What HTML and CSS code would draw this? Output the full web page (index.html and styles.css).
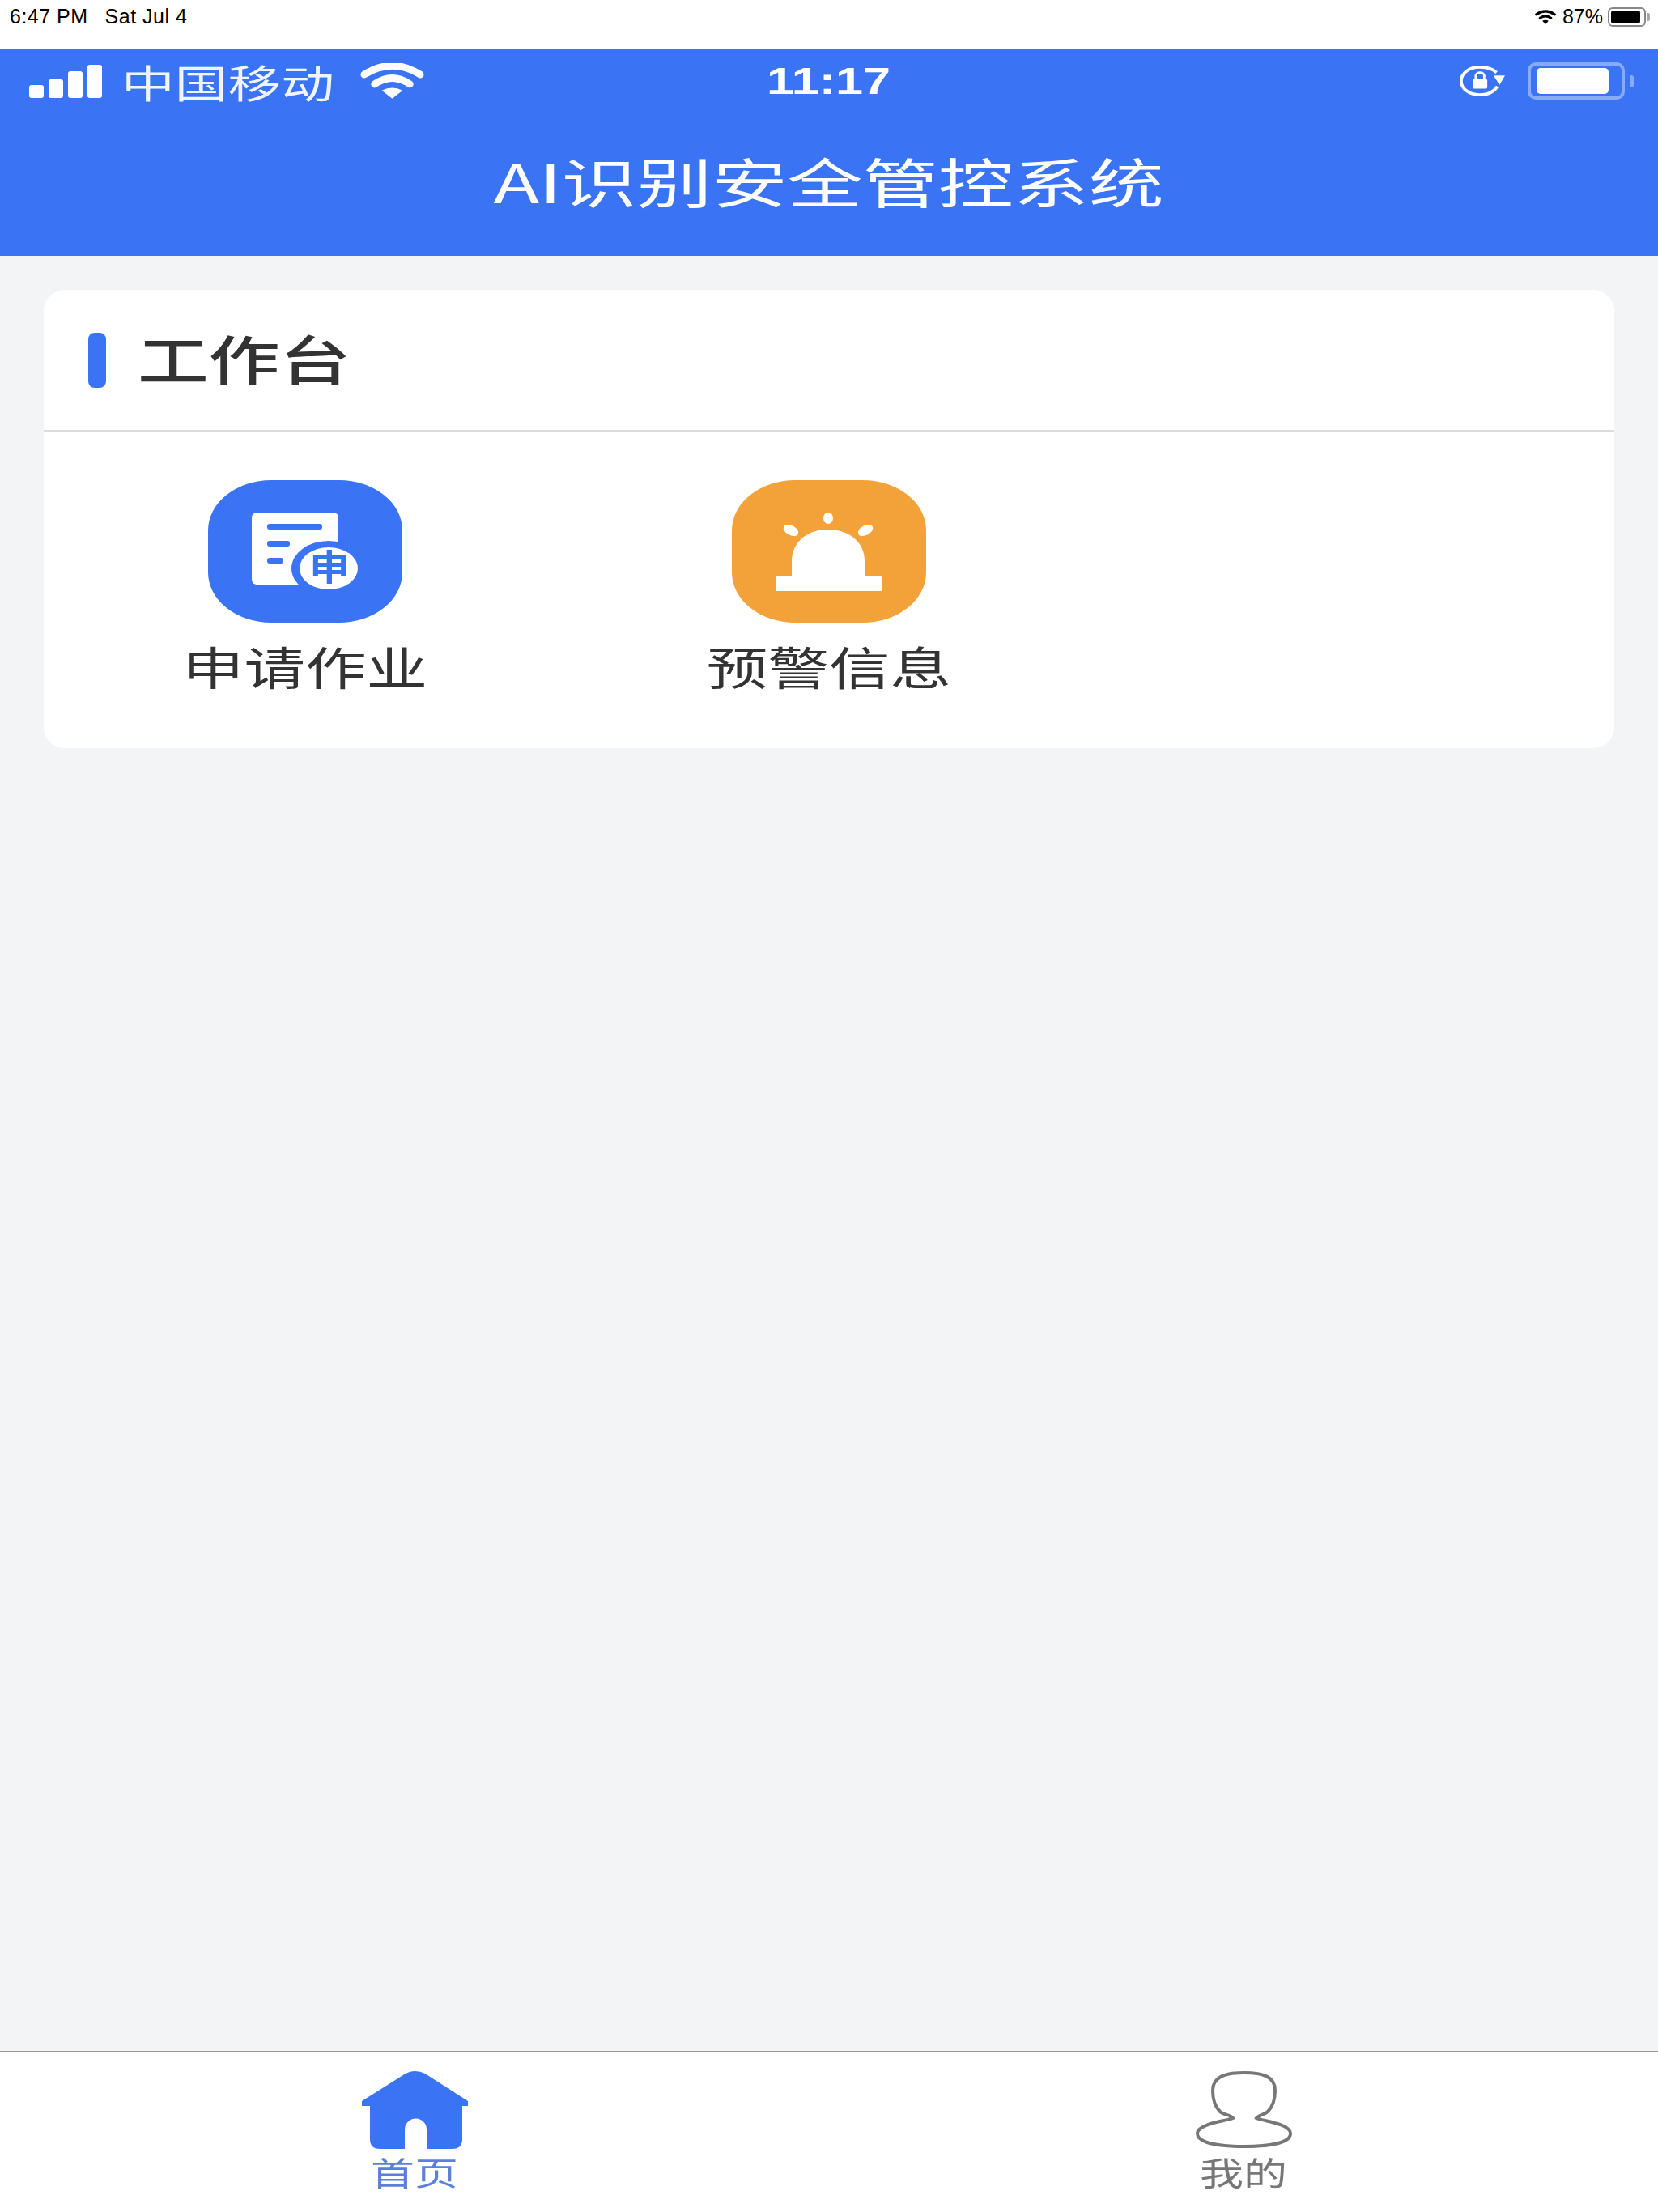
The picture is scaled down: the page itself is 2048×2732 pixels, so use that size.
FILE: index.html
```html
<!DOCTYPE html>
<html lang="zh-CN">
<head>
    <meta charset="UTF-8">
    <meta name="viewport" content="width=device-width, initial-scale=1.0">
    <title>AI识别安全管控系统</title>
    <link rel="stylesheet" href="styles.css">
</head>
<body>

<!-- iPad status bar -->
<div class="sysbar">
    <div class="sys-left">
        <span>6:47 PM</span>
        <span>Sat Jul 4</span>
    </div>
    <div class="sys-right">
        <svg class="sys-wifi" viewBox="0 0 80 56">
            <path d="M5 18Q40 -6 75 18" fill="none" stroke="#000" stroke-width="10" stroke-linecap="round"/>
            <path d="M19 32Q40 17 61 32" fill="none" stroke="#000" stroke-width="10" stroke-linecap="round"/>
            <path d="M28 43Q40 36 52 43L40 56Z" fill="#000"/>
        </svg>
        <span class="sys-pct">87%</span>
        <div class="sys-batt"><div class="sys-batt-fill"></div></div>
        <div class="sys-nub"></div>
    </div>
</div>

<!-- App header, phone status row is part of the app frame -->
<header class="app-head">
    <div class="phone-status">
        <div class="phone-left">
            <div class="signal">
                <i class="bar bar1"></i>
                <i class="bar bar2"></i>
                <i class="bar bar3"></i>
                <i class="bar bar4"></i>
            </div>
            <span class="carrier">中国移动</span>
            <svg class="phone-wifi" viewBox="0 0 80 44">
                <path d="M5 14Q40 -8 75 14" fill="none" stroke="#fff" stroke-width="9" stroke-linecap="round"/>
                <path d="M18 26Q40 11 62 26" fill="none" stroke="#fff" stroke-width="9" stroke-linecap="round"/>
                <path d="M27 34Q40 27 53 34L40 44Z" fill="#fff"/>
            </svg>
        </div>
        <div class="phone-time">11:17</div>
        <div class="phone-right">
            <svg class="rot-lock" viewBox="0 0 60 40">
                <path d="M49 9C44 4 36 2 27 2C13 2 3 10 3 20C3 30 13 38 27 38C39 38 47 33 50 27" fill="none" stroke="#fff" stroke-width="4"/>
                <path d="M45 13L60 13L53 25Z" fill="#fff"/>
                <rect x="18" y="17" width="19" height="13" rx="2" fill="#fff"/>
                <path d="M22 17V13C22 8 33 8 33 13V17" fill="none" stroke="#fff" stroke-width="3"/>
            </svg>
            <div class="phone-batt"><div class="phone-batt-fill"></div></div>
            <div class="phone-nub"></div>
        </div>
    </div>
    <h1 class="app-title">AI识别安全管控系统</h1>
</header>

<div class="content">
    <div class="card">
        <div class="card-head">
            <div class="accent"></div>
            <h2 class="card-title">工作台</h2>
        </div>
        <div class="card-grid">
            <div class="entry">
                <svg class="entry-icon" viewBox="0 0 240 176">
                    <rect class="icon-blue" width="240" height="176" rx="78" ry="62"/>
                    <rect x="54" y="40" width="107" height="89" rx="6" fill="#fff"/>
                    <rect class="icon-blue" x="73" y="54" width="68" height="7" rx="3"/>
                    <rect class="icon-blue" x="73" y="75" width="28" height="7" rx="3"/>
                    <rect class="icon-blue" x="73" y="96" width="20" height="7" rx="3"/>
                    <ellipse class="icon-blue" cx="149" cy="109" rx="46" ry="34"/>
                    <ellipse cx="149" cy="109" rx="36" ry="26" fill="#fff"/>
                    <text class="icon-char" x="150" y="124" text-anchor="middle" textLength="50" lengthAdjust="spacingAndGlyphs">申</text>
                </svg>
                <span class="entry-label">申请作业</span>
            </div>
            <div class="entry">
                <svg class="entry-icon" viewBox="0 0 240 176">
                    <rect class="icon-orange" width="240" height="176" rx="78" ry="62"/>
                    <path d="M74 118V100C74 76 94 61 119 61C144 61 164 76 164 100V118Z" fill="#fff"/>
                    <rect x="54" y="118" width="132" height="19" rx="2" fill="#fff"/>
                    <ellipse cx="119" cy="47" rx="6" ry="7" fill="#fff"/>
                    <ellipse cx="73" cy="62" rx="10" ry="6" fill="#fff" transform="rotate(28 73 62)"/>
                    <ellipse cx="165" cy="62" rx="10" ry="6" fill="#fff" transform="rotate(-28 165 62)"/>
                </svg>
                <span class="entry-label">预警信息</span>
            </div>
        </div>
    </div>
</div>

<nav class="tabbar">
    <div class="tab tab-active">
        <svg class="tab-home" viewBox="0 0 131 96">
            <path d="M0 37L54 3Q66 -3 78 3L131 37V43H124V84Q124 96 112 96H80V72A13.500 13.500 0 0 0 53 72V96H22Q10 96 10 84V43H0Z" fill="#3a74f4"/>
        </svg>
        <span class="tab-label">首页</span>
    </div>
    <div class="tab">
        <svg class="tab-user" viewBox="0 0 119 96">
            <path d="M46 58C44 54 34 54 30 50C24 44 21 36 21 24C21 7 36 2 60 2C84 2 98 7 98 24C98 36 95 44 89 50C85 54 77 54 75 58C85 62 117 65 117 77C117 89 90 93 60 93C30 93 2 89 2 77C2 65 36 62 46 58Z" fill="none" stroke="#777" stroke-width="4"/>
        </svg>
        <span class="tab-label">我的</span>
    </div>
</nav>

</body>
</html>
```
FILE: styles.css
```css
/* App frame */
* {
    box-sizing: border-box;
}
body {
    font-family: "Noto Sans CJK SC", "Liberation Sans", sans-serif;
    margin: 0;
    width: 2048px;
    height: 2732px;
    display: flex;
    flex-direction: column;
    background-color: #f3f4f6;
    color: #333;
    overflow: hidden;
}

/* iPad status bar */
.sysbar {
    height: 60px;
    flex: none;
    background-color: #fff;
    color: #000;
    display: flex;
    justify-content: space-between;
    align-items: flex-start;
    padding: 6px 10px 0 12px;
    font-family: "Liberation Sans", sans-serif;
    font-size: 25px;
}
.sys-left {
    display: flex;
    gap: 21px;
    letter-spacing: .5px;
}
.sys-right {
    display: flex;
    align-items: center;
}
.sys-wifi {
    width: 26px;
    height: 18px;
    margin-right: 8px;
}
.sys-pct {
    margin-right: 6px;
}
.sys-batt {
    width: 47px;
    height: 24px;
    border: 2px solid #888;
    border-radius: 6px;
    padding: 2px;
}
.sys-batt-fill {
    width: 36px;
    height: 100%;
    background-color: #000;
    border-radius: 3px;
}
.sys-nub {
    width: 3px;
    height: 10px;
    margin-left: 2px;
    background-color: #aaa;
    border-radius: 0 2px 2px 0;
}

/* Blue header */
.app-head {
    height: 256px;
    flex: none;
    display: flex;
    flex-direction: column;
    align-items: center;
    padding-top: 16px;
    background-color: #3a74f4;
    color: #fff;
}
.phone-status {
    align-self: stretch;
    display: grid;
    grid-template-columns: 1fr auto 1fr;
    align-items: center;
    height: 46px;
    padding: 0 30px;
}
.phone-left {
    display: flex;
    align-items: center;
}
.signal {
    display: flex;
    align-items: flex-end;
    gap: 6px;
    height: 41px;
    width: 90px;
    margin: 0 24px 0 6px;
}
.bar {
    display: block;
    width: 18px;
    background-color: #fff;
    border-radius: 3px;
}
.bar1 { height: 16px; }
.bar2 { height: 23px; }
.bar3 { height: 33px; }
.bar4 { height: 41px; }
.carrier {
    font-size: 48px;
    line-height: 48px;
    transform: scaleX(1.37);
    transform-origin: left center;
    margin-right: 103px;
    opacity: .92;
}
.phone-wifi {
    width: 79px;
    height: 44px;
}
.phone-time {
    font-family: "Liberation Sans", sans-serif;
    font-size: 46px;
    font-weight: 700;
    line-height: 46px;
    transform: scaleX(1.33);
}
.phone-right {
    display: flex;
    align-items: center;
    justify-content: flex-end;
}
.rot-lock {
    width: 59px;
    height: 38px;
    margin-right: 27px;
}
.phone-batt {
    width: 120px;
    height: 46px;
    border: 4px solid rgba(255, 255, 255, .4);
    border-radius: 10px;
    padding: 3px 16px 3px 7px;
}
.phone-batt-fill {
    height: 100%;
    background-color: #fff;
    border-radius: 5px;
}
.phone-nub {
    width: 5px;
    height: 15px;
    margin-left: 6px;
    background-color: rgba(255, 255, 255, .4);
    border-radius: 0 3px 3px 0;
}
.app-title {
    margin: 67px 0 0;
    font-size: 66px;
    font-weight: 400;
    line-height: 66px;
    transform: scaleX(1.41);
}

/* Work card */
.content {
    flex: 1;
    padding: 42px 54px;
}
.card {
    background-color: #fff;
    border-radius: 26px;
}
.card-head {
    display: flex;
    align-items: center;
    height: 175px;
    padding-left: 55px;
    border-bottom: 2px solid #dcdcdc;
}
.accent {
    width: 22px;
    height: 68px;
    background-color: #3a74f4;
    border-radius: 8px;
    margin-right: 39px;
}
.card-title {
    margin: 0 0 8px;
    font-size: 66px;
    font-weight: 500;
    line-height: 70px;
    color: #333;
    transform: scaleX(1.33);
    transform-origin: left center;
}
.card-grid {
    display: grid;
    grid-template-columns: repeat(3, 1fr);
    padding: 60px 0 72px;
}
.entry {
    display: flex;
    flex-direction: column;
    align-items: center;
}
.entry-icon {
    width: 240px;
    height: 176px;
}
.icon-blue {
    fill: #3a74f4;
}
.icon-orange {
    fill: #f3a239;
}
.icon-char {
    font-size: 44px;
    font-weight: 700;
    fill: #3a74f4;
}
.entry-label {
    margin-top: 23px;
    font-size: 56px;
    line-height: 60px;
    transform: scaleX(1.35);
}

/* Bottom tabs */
.tabbar {
    height: 199px;
    flex: none;
    display: flex;
    background-color: #fff;
    border-top: 2px solid #999;
}
.tab {
    flex: 1;
    display: flex;
    flex-direction: column;
    align-items: center;
    padding-top: 23px;
    color: #777;
}
.tab-active {
    color: #5b80dc;
}
.tab-home {
    width: 131px;
    height: 96px;
}
.tab-user {
    width: 119px;
    height: 96px;
}
.tab-label {
    margin-top: 6px;
    font-size: 40px;
    line-height: 44px;
    transform: scaleX(1.35);
}

/* The whole app frame is an upscaled phone view, so it is a bit soft */
.app-head, .card, .tabbar {
    filter: blur(.6px);
}
```
